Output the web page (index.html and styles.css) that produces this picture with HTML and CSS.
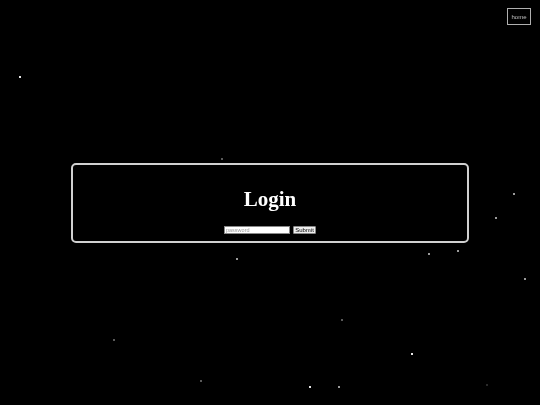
FILE: index.html
```html
<!DOCTYPE html>
<html lang="en">
<head>
<meta charset="utf-8">
<title>Login</title>
<link rel="stylesheet" href="styles.css">
</head>
<body>
<div class="sky">
  <span class="star bright" style="left:19px;top:76px"></span>
  <span class="star dim" style="left:221px;top:158px"></span>
  <span class="star" style="left:513px;top:193px"></span>
  <span class="star" style="left:495px;top:217px"></span>
  <span class="star" style="left:428px;top:253px"></span>
  <span class="star" style="left:457px;top:250px"></span>
  <span class="star" style="left:236px;top:258px"></span>
  <span class="star" style="left:524px;top:278px"></span>
  <span class="star dim" style="left:341px;top:319px"></span>
  <span class="star dim" style="left:113px;top:339px"></span>
  <span class="star bright" style="left:411px;top:353px"></span>
  <span class="star dim" style="left:200px;top:380px"></span>
  <span class="star bright" style="left:309px;top:386px"></span>
  <span class="star" style="left:338px;top:386px"></span>
  <span class="star faint" style="left:486px;top:384px"></span>
</div>
<a class="home" href="#">home</a>
<main class="page">
  <section class="card">
    <h1 class="title">Login</h1>
    <form class="form">
      <input class="field" type="password" placeholder="password">
      <button class="submit" type="button">Submit</button>
    </form>
  </section>
</main>
</body>
</html>
```
FILE: styles.css
```css
html, body {
  margin: 0;
  padding: 0;
  height: 100%;
  background: #000;
}
body {
  font-family: "Liberation Sans", Arial, sans-serif;
  overflow: hidden;
}
.sky {
  position: fixed;
  inset: 0;
  pointer-events: none;
}
.star {
  position: absolute;
  width: 2px;
  height: 2px;
  background: #9a9a9a;
}
.star.bright { background: #e6e6e6; }
.star.dim { background: #5a5a5a; }
.star.faint { background: #2a2a2a; }
.home {
  position: absolute;
  top: 8px;
  right: 9px;
  width: 24px;
  height: 17px;
  box-sizing: border-box;
  border: 1px solid #b0b0b0;
  color: #c0c0c0;
  font-size: 6px;
  display: flex;
  align-items: center;
  justify-content: center;
  text-decoration: none;
}
.page {
  height: 100%;
  display: flex;
  align-items: center;
  justify-content: center;
}
.card {
  position: relative;
  width: 398px;
  height: 80px;
  box-sizing: border-box;
  border: 2px solid #d0d0d0;
  border-radius: 5px;
  padding-top: 23px;
  display: flex;
  flex-direction: column;
  align-items: center;
}
.title {
  margin: 0;
  font-family: "Liberation Serif", "Times New Roman", serif;
  font-weight: bold;
  font-size: 21px;
  line-height: 23px;
  color: #fff;
}
.form {
  margin: 15px 0 0;
  display: flex;
  gap: 3px;
}
.field {
  width: 66px;
  height: 8px;
  box-sizing: border-box;
  margin: 0;
  padding: 0 1px;
  border: 1px solid #888;
  background: #fff;
  font-size: 5.5px;
  font-family: "Liberation Sans", Arial, sans-serif;
}
.field::placeholder { color: #9a9a9a; }
.submit {
  width: 23px;
  height: 8px;
  box-sizing: border-box;
  margin: 0;
  padding: 0;
  border: 1px solid #888;
  border-radius: 1px;
  background: #efefef;
  color: #000;
  font-size: 6px;
  line-height: 6px;
  font-family: "Liberation Sans", Arial, sans-serif;
}
```
